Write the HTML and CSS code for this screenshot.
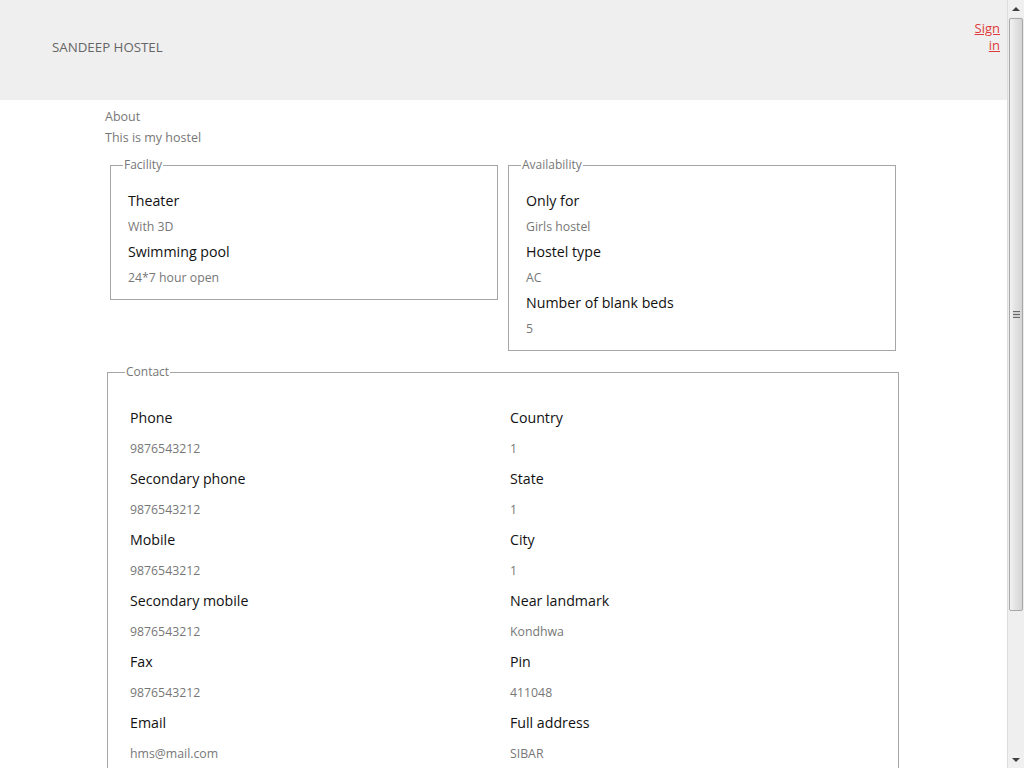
FILE: index.html
```html
<!DOCTYPE html>
<html lang="en">
<head>
<meta charset="utf-8">
<title>Sandeep Hostel</title>
<link rel="stylesheet" href="styles.css">
</head>
<body>
<div class="page">
  <header class="topbar">
    <div class="brand">SANDEEP HOSTEL</div>
    <a class="signin" href="#">Sign in</a>
  </header>
  <main class="container">
    <section class="about">
      <div class="about-title">About</div>
      <div class="about-text">This is my hostel</div>
    </section>
    <div class="row">
      <div class="col">
        <fieldset class="box">
          <legend>Facility</legend>
          <div class="label">Theater</div>
          <div class="value">With 3D</div>
          <div class="label">Swimming pool</div>
          <div class="value">24*7 hour open</div>
        </fieldset>
      </div>
      <div class="col">
        <fieldset class="box">
          <legend>Availability</legend>
          <div class="label">Only for</div>
          <div class="value">Girls hostel</div>
          <div class="label">Hostel type</div>
          <div class="value">AC</div>
          <div class="label">Number of blank beds</div>
          <div class="value">5</div>
        </fieldset>
      </div>
    </div>
    <fieldset class="box contact">
      <legend>Contact</legend>
      <div class="contact-grid">
        <div class="ccol">
          <div class="clabel">Phone</div>
          <div class="cvalue">9876543212</div>
          <div class="clabel">Secondary phone</div>
          <div class="cvalue">9876543212</div>
          <div class="clabel">Mobile</div>
          <div class="cvalue">9876543212</div>
          <div class="clabel">Secondary mobile</div>
          <div class="cvalue">9876543212</div>
          <div class="clabel">Fax</div>
          <div class="cvalue">9876543212</div>
          <div class="clabel">Email</div>
          <div class="cvalue">hms@mail.com</div>
        </div>
        <div class="ccol">
          <div class="clabel">Country</div>
          <div class="cvalue">1</div>
          <div class="clabel">State</div>
          <div class="cvalue">1</div>
          <div class="clabel">City</div>
          <div class="cvalue">1</div>
          <div class="clabel">Near landmark</div>
          <div class="cvalue">Kondhwa</div>
          <div class="clabel">Pin</div>
          <div class="cvalue">411048</div>
          <div class="clabel">Full address</div>
          <div class="cvalue">SIBAR</div>
        </div>
      </div>
    </fieldset>
    <div class="spacer"></div>
  </main>
</div>
<div class="scrollbar" aria-hidden="true">
  <div class="sb-btn"><span class="arrow-up"></span></div>
  <div class="sb-thumb"><span class="grip"></span></div>
  <div class="sb-track"></div>
  <div class="sb-btn"><span class="arrow-down"></span></div>
</div>
</body>
</html>
```
FILE: styles.css
```css
html, body {
  margin: 0;
  padding: 0;
  background: #fff;
}
body {
  font-family: "Open Sans", "Noto Sans", "Liberation Sans", sans-serif;
  color: #777;
}
::-webkit-scrollbar {
  width: 0;
  height: 0;
}
.page {
  margin-right: 17px;
}
.topbar {
  height: 100px;
  background: #efefef;
  display: flex;
  align-items: flex-start;
  justify-content: space-between;
}
.brand {
  margin: 38px 0 0 52px;
  font-size: 13.3px;
  line-height: 18px;
  color: #666;
}
.signin {
  width: 30px;
  margin: 20px 7px 0 0;
  text-align: right;
  font-size: 13px;
  line-height: 17px;
  color: #e03b3b;
}
.container {
  margin: 0 106px 0 105px;
  padding-top: 6px;
}
.about {
  font-size: 12.5px;
  line-height: 21px;
  color: #777;
}
.row {
  display: flex;
  align-items: flex-start;
  margin-top: 9px;
}
.col {
  flex: 1;
  padding: 0 5px;
}
.box {
  margin: 0;
  padding: 15px 17px 9px 17px;
  border: 1px solid #a6a6a6;
}
.box legend {
  font-size: 12px;
  line-height: 16px;
  padding: 0 1px;
  margin-left: -5px;
  color: #777;
}
.label {
  font-size: 14.2px;
  line-height: 26px;
  color: #111;
}
.value {
  font-size: 12.3px;
  line-height: 25px;
  color: #777;
}
.contact {
  margin: 13px 2px 0 2px;
  padding: 23px 17px 20px 22px;
}
.contact-grid {
  display: grid;
  grid-template-columns: 380px 1fr;
}
.clabel {
  font-size: 14.2px;
  line-height: 30px;
  color: #111;
}
.cvalue {
  font-size: 12.3px;
  line-height: 31px;
  color: #777;
}
.spacer {
  height: 200px;
}

/* simulated window scrollbar */
.scrollbar {
  position: fixed;
  top: 0;
  right: 0;
  width: 17px;
  height: 100vh;
  display: flex;
  flex-direction: column;
  background: #ececec;
  border-left: 1px solid #dcdcdc;
  box-sizing: border-box;
}
.sb-btn {
  height: 17px;
  display: flex;
  align-items: center;
  justify-content: center;
  background: #f0f0f0;
}
.arrow-up {
  width: 0;
  height: 0;
  border-left: 4px solid transparent;
  border-right: 4px solid transparent;
  border-bottom: 4px solid #404040;
}
.arrow-down {
  width: 0;
  height: 0;
  border-left: 4px solid transparent;
  border-right: 4px solid transparent;
  border-top: 4px solid #404040;
}
.sb-thumb {
  height: 593px;
  margin: 1px 1px 0 1px;
  border: 1px solid #a8a8a8;
  border-radius: 2px;
  background: linear-gradient(to right, #f2f2f2, #e2e2e2 50%, #d4d4d4);
  display: flex;
  align-items: center;
  justify-content: center;
  box-sizing: border-box;
}
.grip {
  width: 7px;
  height: 7px;
  background: repeating-linear-gradient(to bottom, #6a6a6a 0, #6a6a6a 1px, #cfcfcf 1px, #cfcfcf 3px);
}
.sb-track {
  flex: 1;
  background: #efefef;
}
```
